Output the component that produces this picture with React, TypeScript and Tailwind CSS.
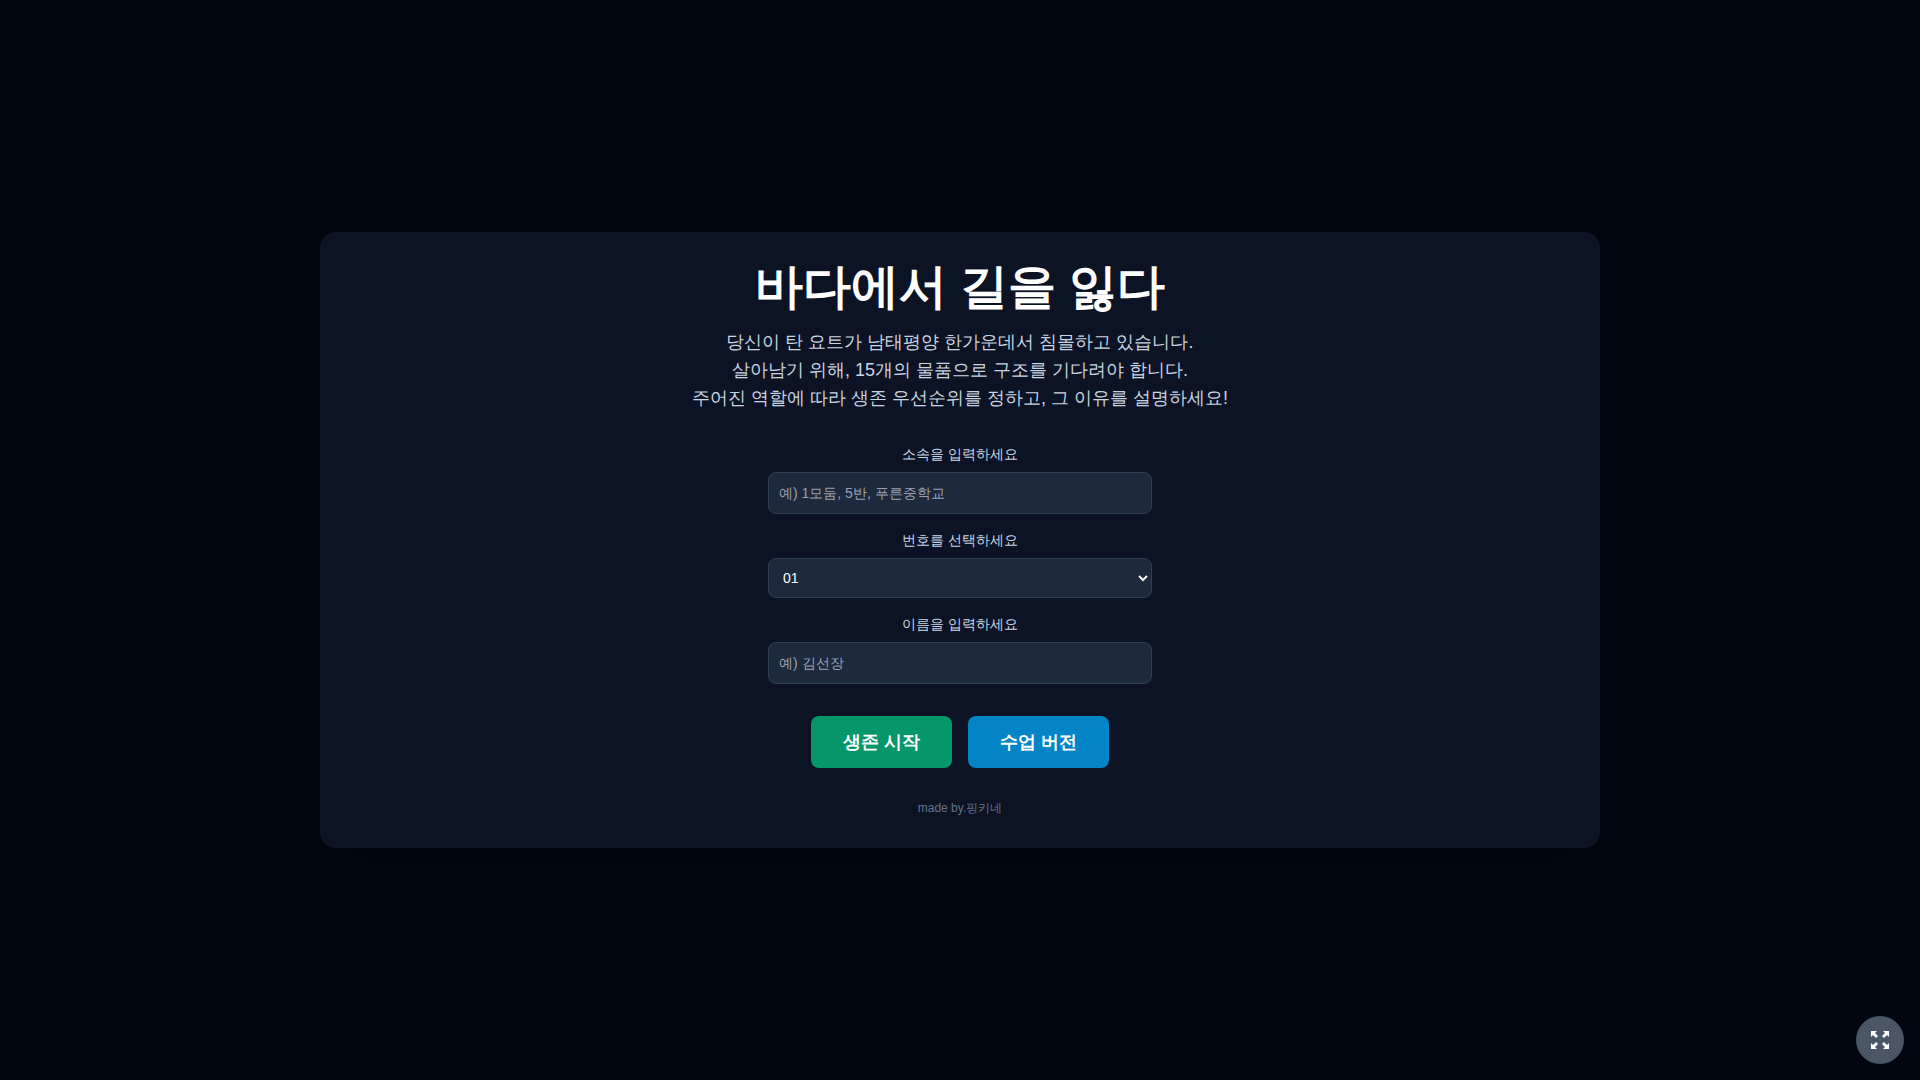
import React from "react";

const inputClass =
  "block w-full rounded-lg border border-slate-700 bg-slate-800 p-2.5 text-sm text-white placeholder-gray-400";
const actionClass = "rounded-lg px-8 py-3 text-lg font-bold text-white";

const numbers = Array.from({ length: 40 }, (_, i) => String(i + 1).padStart(2, "0"));

function Field({ id, label, children }: { id: string; label: string; children: React.ReactNode }) {
  return (
    <div>
      <label htmlFor={id} className="mb-2 block text-sm text-slate-300">
        {label}
      </label>
      {children}
    </div>
  );
}

export default function App() {
  return (
    <main className="flex min-h-screen items-center justify-center bg-[#010610] p-4 font-['Liberation_Sans',sans-serif] text-slate-200">
      <section className="w-full max-w-7xl rounded-2xl bg-[#0c1324] px-8 pt-6 pb-8 text-center shadow-2xl">
        <h1 className="mb-2.5 text-5xl leading-[62px] font-bold text-white">바다에서 길을 잃다</h1>
        <p className="mb-8 text-lg leading-7 text-slate-300">
          당신이 탄 요트가 남태평양 한가운데서 침몰하고 있습니다.
          <br />
          살아남기 위해, 15개의 물품으로 구조를 기다려야 합니다.
          <br />
          주어진 역할에 따라 생존 우선순위를 정하고, 그 이유를 설명하세요!
        </p>
        <form className="mx-auto flex max-w-sm flex-col gap-4">
          <Field id="group" label="소속을 입력하세요">
            <input id="group" type="text" placeholder="예) 1모둠, 5반, 푸른중학교" className={inputClass} />
          </Field>
          <Field id="number" label="번호를 선택하세요">
            <select id="number" className={inputClass}>
              {numbers.map((n) => (
                <option key={n}>{n}</option>
              ))}
            </select>
          </Field>
          <Field id="name" label="이름을 입력하세요">
            <input id="name" type="text" placeholder="예) 김선장" className={inputClass} />
          </Field>
        </form>
        <div className="mt-8 flex justify-center gap-4">
          <button type="button" className={`${actionClass} bg-[#059669]`}>생존 시작</button>
          <button type="button" className={`${actionClass} bg-[#0284c7]`}>수업 버전</button>
        </div>
        <p className="mt-8 text-xs text-slate-500">made by.핑키네</p>
      </section>
      <button
        type="button"
        aria-label="전체 화면"
        className="fixed right-4 bottom-4 flex size-12 items-center justify-center rounded-full bg-gray-600 text-white shadow-lg"
      >
        <svg viewBox="0 0 24 24" className="size-6" fill="currentColor" aria-hidden="true">
          <path d="M3 3h6L7 5l3 3-2 2-3-3-2 2zM21 3h-6l2 2-3 3 2 2 3-3 2 2zM3 21h6l-2-2 3-3-2-2-3 3-2-2zM21 21h-6l2-2-3-3 2-2 3 3 2-2z" />
        </svg>
      </button>
    </main>
  );
}
